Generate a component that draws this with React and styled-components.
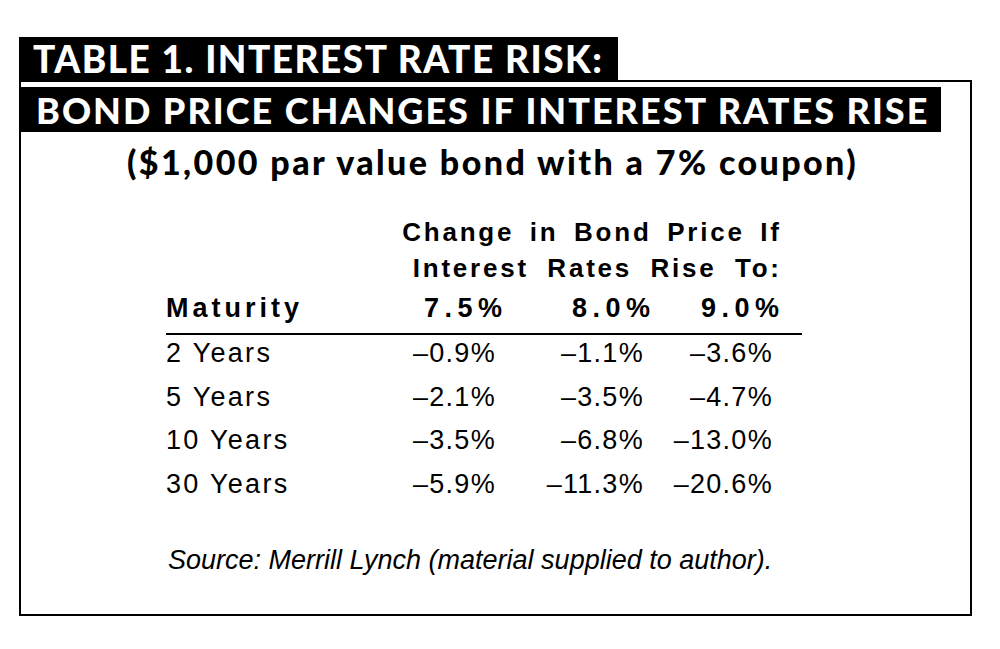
import React from "react";
import styled, { createGlobalStyle } from "styled-components";

const Global = createGlobalStyle`
  html, body { margin: 0; padding: 0; background: #fff; }
  body { width: 1000px; height: 649px; overflow: hidden; }
`;

const Page = styled.div`
  padding: 37px 0 0 19px;
  width: 1000px;
  box-sizing: border-box;
`;

const Banner = styled.div`
  display: flex;
  align-items: center;
  background: #000;
  color: #fff;
  font-family: Lato, "Open Sans", sans-serif;
  font-weight: 900;
  font-size: ${(p) => p.$size}px;
  letter-spacing: ${(p) => p.$spacing}px;
  width: ${(p) => p.$width}px;
  height: ${(p) => p.$height}px;
  padding-left: ${(p) => p.$pad}px;
  box-sizing: border-box;
  white-space: nowrap;
  line-height: 1;
`;

const Box = styled.div`
  width: 953px;
  height: 536px;
  box-sizing: border-box;
  border: 2px solid #000;
  display: flex;
  flex-direction: column;
  align-items: flex-start;
`;

const BannerTwo = styled(Banner)`
  margin: 5px 0 0 -2px;
`;

const Subtitle = styled.div`
  align-self: stretch;
  text-align: center;
  font-family: Lato, "Open Sans", sans-serif;
  font-weight: 900;
  font-size: 34px;
  letter-spacing: 2.4px;
  line-height: 40px;
  margin-top: 10px;
  padding-right: 6px;
  color: #000;
  white-space: nowrap;
`;

const Table = styled.div`
  margin: 32px 0 0 145px;
  width: 636px;
  display: grid;
  grid-template-columns: 234px 102px 148px 129px 23px;
  font-family: "Liberation Sans", Arial, sans-serif;
  color: #000;
`;

const HeadSpan = styled.div`
  grid-column: 2 / 5;
  text-align: right;
  font-weight: 700;
  font-size: 26px;
  letter-spacing: 2.8px;
  word-spacing: ${(p) => p.$words}px;
  line-height: 36px;
  margin-right: -2.8px;
  white-space: nowrap;
`;

const HeadCell = styled.div`
  font-weight: 700;
  font-size: 27px;
  letter-spacing: ${(p) => (p.$first ? 4 : 5.5)}px;
  text-align: ${(p) => (p.$first ? "left" : "right")};
  line-height: 44px;
  border-bottom: 2px solid #000;
  padding-bottom: 3px;
  margin-right: ${(p) => (p.$first ? 0 : -5.5)}px;
`;

const Rule = styled.div`
  border-bottom: 2px solid #000;
`;

const Cell = styled.div`
  font-size: 27px;
  letter-spacing: ${(p) => (p.$first ? 2.3 : 1.3)}px;
  text-align: ${(p) => (p.$first ? "left" : "right")};
  line-height: 37.7px;
  padding-bottom: 6px;
  padding-right: ${(p) => (p.$first ? 0 : 6)}px;
  white-space: nowrap;
`;

const Spacer = styled.div``;

const Source = styled.div`
  margin: 35px 0 0 147px;
  font-family: "Liberation Sans", Arial, sans-serif;
  font-style: italic;
  font-size: 27px;
  line-height: 30px;
  white-space: nowrap;
`;

const rows = [
  ["2 Years", "–0.9%", "–1.1%", "–3.6%"],
  ["5 Years", "–2.1%", "–3.5%", "–4.7%"],
  ["10 Years", "–3.5%", "–6.8%", "–13.0%"],
  ["30 Years", "–5.9%", "–11.3%", "–20.6%"],
];

export default function App() {
  return (
    <>
      <Global />
      <Page>
        <Banner $size={37} $spacing={1.5} $width={599} $height={43} $pad={14}>
          TABLE 1. INTEREST RATE RISK:
        </Banner>
        <Box>
          <BannerTwo $size={36} $spacing={2.0} $width={922} $height={45} $pad={17}>
            BOND PRICE CHANGES IF INTEREST RATES RISE
          </BannerTwo>
          <Subtitle>($1,000 par value bond with a 7% coupon)</Subtitle>
          <Table>
            <HeadSpan $words={5.5}>Change in Bond Price If</HeadSpan>
            <Spacer />
            <Spacer />
            <HeadSpan $words={8.3}>Interest Rates Rise To:</HeadSpan>
            <Spacer />
            <HeadCell $first>Maturity</HeadCell>
            <HeadCell>7.5%</HeadCell>
            <HeadCell>8.0%</HeadCell>
            <HeadCell>9.0%</HeadCell>
            <Rule />
            {rows.map((r) => (
              <React.Fragment key={r[0]}>
                <Cell $first>{r[0]}</Cell>
                <Cell>{r[1]}</Cell>
                <Cell>{r[2]}</Cell>
                <Cell>{r[3]}</Cell>
                <Spacer />
              </React.Fragment>
            ))}
          </Table>
          <Source>Source: Merrill Lynch (material supplied to author).</Source>
        </Box>
      </Page>
    </>
  );
}
